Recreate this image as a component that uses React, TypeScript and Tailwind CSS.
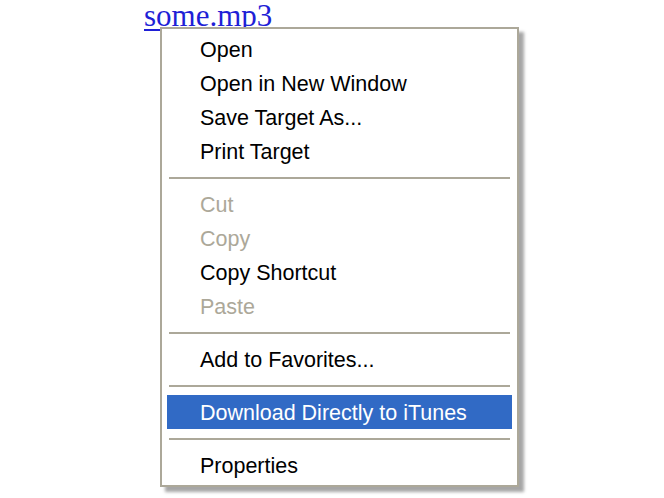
type Entry = { label: string; disabled?: boolean; active?: boolean } | 'sep'

const entries: Entry[] = [
  { label: 'Open' },
  { label: 'Open in New Window' },
  { label: 'Save Target As...' },
  { label: 'Print Target' },
  'sep',
  { label: 'Cut', disabled: true },
  { label: 'Copy', disabled: true },
  { label: 'Copy Shortcut' },
  { label: 'Paste', disabled: true },
  'sep',
  { label: 'Add to Favorites...' },
  'sep',
  { label: 'Download Directly to iTunes', active: true },
  'sep',
  { label: 'Properties' },
]

export default function App() {
  return (
    <div className="relative w-[664px] h-[498px] bg-white overflow-hidden">
      {/* link that was right-clicked */}
      <a
        href="#"
        className="absolute left-[144px] top-0 text-[31px] leading-none text-[#1f1fd6] underline underline-offset-[3px] decoration-[2px]"
        style={{ fontFamily: '"Liberation Serif", serif' }}
      >
        some.mp3
      </a>

      {/* context menu */}
      <div
        className="absolute left-[160px] top-[27px] w-[359px] bg-white border-2 border-[#aca899] px-[5px] py-[3px] shadow-[5px_5px_3px_rgba(0,0,0,0.35)]"
        style={{ fontFamily: '"Liberation Sans", Arial, sans-serif' }}
      >
        {entries.map((e, i) =>
          e === 'sep' ? (
            <div key={i} className="h-[19px] flex items-center px-[2px]">
              <div className="h-[2px] w-full bg-[#aca899]" />
            </div>
          ) : (
            <div
              key={i}
              className={
                'h-[34px] flex items-center pl-[33px] pt-[2px] text-[21.5px] ' +
                (e.active ? 'bg-[#316ac5] text-white' : e.disabled ? 'text-[#aca899]' : 'text-black')
              }
            >
              {e.label}
            </div>
          )
        )}
      </div>
    </div>
  )
}
